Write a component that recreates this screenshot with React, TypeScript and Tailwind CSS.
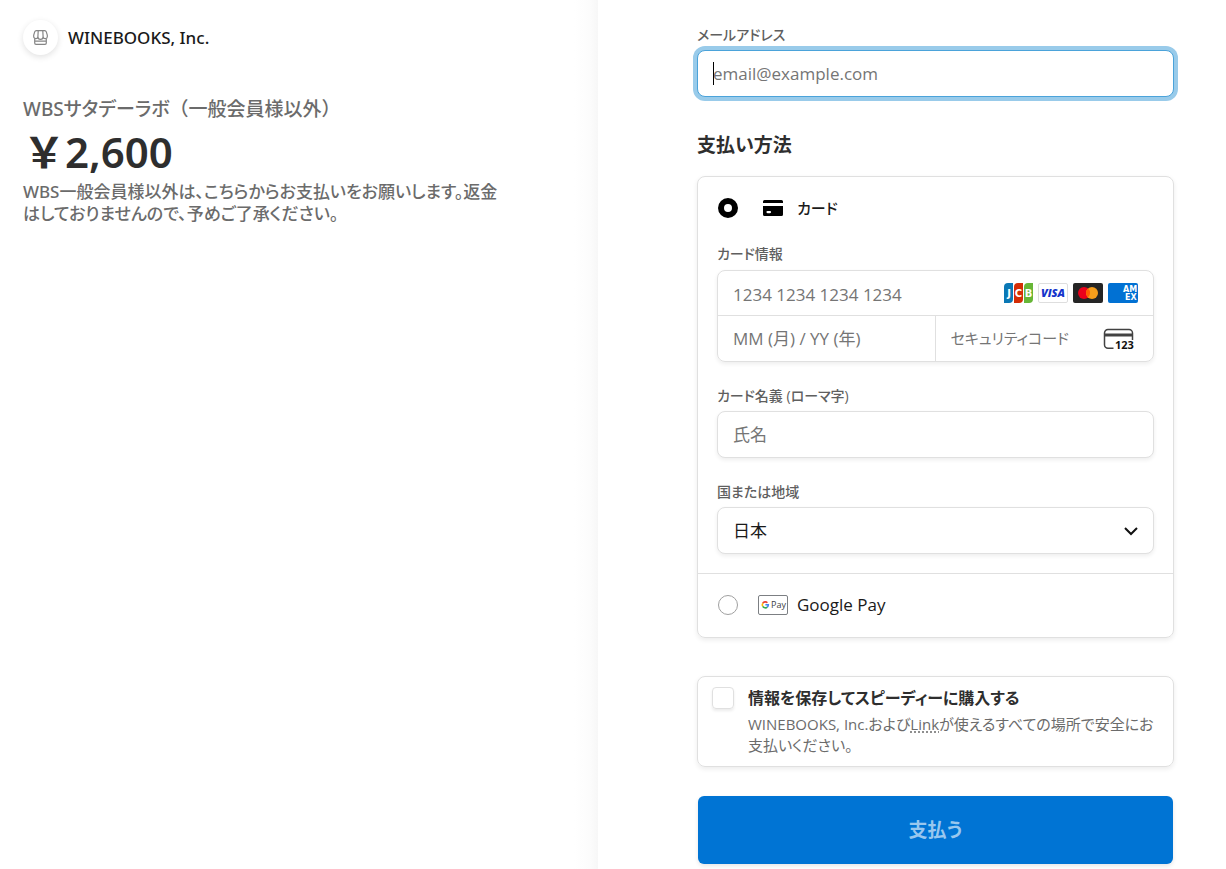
import React from "react";

const fieldClass =
  "h-[47px] w-full rounded-lg border border-[#e0e0e0] bg-white px-[15px] text-[17px] text-[#1a1a1a] shadow-[0_2px_4px_rgba(0,0,0,0.07)] outline-none placeholder:text-[#757575]";

const labelClass = "block text-[14px] leading-5 font-medium text-[#5f5f5f]";

const StoreIcon: React.FC = () => (
  <svg width="15" height="15" viewBox="0 0 15 15" fill="none" stroke="#858585" strokeWidth="1.2" strokeLinejoin="round">
    <path d="M3.400 0.700h8.200q1.300 0 1.700 1.200l1 3.300v1.200a2.100 2.100 0 0 1-4.200 0.300 2.600 2.600 0 0 1-5.200 0 2.100 2.100 0 0 1-4.200-0.300V5.200l1-3.300Q2.100 0.700 3.400 0.700z" />
    <path d="M5.200 1l-0.300 5.500M9.800 1l0.300 5.500" />
    <path d="M1.700 8.800v4.200q0 1.300 1.300 1.300h9q1.300 0 1.300-1.300V8.800M1.700 11.200h11.600" />
  </svg>
);

const JcbIcon: React.FC = () => (
  <svg width="30" height="20" viewBox="-1 0 30 20" fontFamily="DejaVu Sans, sans-serif" fontWeight="700" fontSize="10" textAnchor="middle">
    <path d="M4 0h5v16a4 4 0 0 1-4 4H0V4a4 4 0 0 1 4-4z" fill="#0a78b5" />
    <path d="M14 0h5v16a4 4 0 0 1-4 4h-5V4a4 4 0 0 1 4-4z" fill="#d42d06" />
    <path d="M24 0h5v16a4 4 0 0 1-4 4h-5V4a4 4 0 0 1 4-4z" fill="#67b637" />
    <text x="5" y="13.600" fill="#fff">J</text>
    <text x="14.500" y="13.600" fill="#fff">C</text>
    <text x="24.500" y="13.600" fill="#fff">B</text>
  </svg>
);

const VisaIcon: React.FC = () => (
  <svg width="30" height="20" viewBox="0 0 30 20">
    <rect x="0.5" y="0.5" width="29" height="19" rx="1.5" fill="#fff" stroke="#dedede" />
    <text x="15" y="14" textAnchor="middle" fontFamily="Open Sans, sans-serif" fontWeight="800" fontStyle="italic" fontSize="11" fill="#1434cb">
      VISA
    </text>
  </svg>
);

const MastercardIcon: React.FC = () => (
  <svg width="30" height="20" viewBox="0 0 30 20">
    <rect width="30" height="20" rx="2" fill="#252525" />
    <circle cx="11" cy="10" r="6" fill="#eb001b" />
    <circle cx="19" cy="10" r="6" fill="#f79e1b" />
    <path d="M15 5.500a6 6 0 0 1 0 9a6 6 0 0 1 0-9z" fill="#ff5f00" />
  </svg>
);

const AmexIcon: React.FC = () => (
  <svg width="30" height="20" viewBox="0 0 30 20" fontFamily="DejaVu Sans, sans-serif" fontWeight="700" fontSize="8" fill="#fff">
    <rect width="30" height="20" rx="2" fill="#0171d3" />
    <text x="15" y="9">AM</text>
    <text x="17" y="17">EX</text>
  </svg>
);

const CvcIcon: React.FC = () => (
  <svg width="32" height="22" viewBox="0 0 32 22">
    <path d="M10.500 20.200H5a3.500 3.500 0 0 1-3.500-3.500V5A3.500 3.500 0 0 1 5 1.500h21A3.500 3.500 0 0 1 29.500 5v7" fill="none" stroke="#424242" strokeWidth="1.500" />
    <path d="M1.500 5.500h28v3h-28z" fill="#424242" />
    <text x="12" y="20.500" fontFamily="Open Sans, sans-serif" fontWeight="700" fontSize="11" fill="#111">123</text>
  </svg>
);

const CardIcon: React.FC = () => (
  <svg width="20" height="16" viewBox="0 0 20 16">
    <path d="M1.500 0h17A1.500 1.500 0 0 1 20 1.500V3H0V1.500A1.500 1.500 0 0 1 1.500 0z" />
    <path fillRule="evenodd" d="M0 6h20v8.500a1.500 1.500 0 0 1-1.500 1.500h-17A1.500 1.500 0 0 1 0 14.500zM4.500 11a1 1 0 0 0 0 2.200H7A1 1 0 0 0 7 11z" />
  </svg>
);

const GooglePayIcon: React.FC = () => (
  <svg width="30" height="20" viewBox="0 0 30 20">
    <rect x="0.500" y="0.500" width="29" height="19" rx="1.500" fill="#fff" stroke="#7c7f83" />
    <g fill="none" strokeWidth="1.600">
      <path d="M9.400 7.700A3 3 0 0 0 4.800 8.200" stroke="#ea4335" />
      <path d="M4.800 8.200a3 3 0 0 0 0 3.200" stroke="#fbbc04" />
      <path d="M4.800 11.400a3 3 0 0 0 4.500 0.700" stroke="#34a853" />
      <path d="M9.300 12.100a3 3 0 0 0 1-2.300H7.400" stroke="#4285f4" />
    </g>
    <text x="13" y="13" fontFamily="Open Sans, sans-serif" fontSize="9" fill="#3c4043">Pay</text>
  </svg>
);

const Summary: React.FC = () => (
  <section className="w-[calc(50%-15px)] bg-linear-to-l from-[#f7f7f7] via-[#fcfcfc] via-[8px] to-white to-[24px] pt-5 pl-[23px] font-['Noto_Sans','Noto_Sans_CJK_JP',sans-serif]">
    <div className="flex items-center gap-[10px]">
      <span className="flex size-[35px] items-center justify-center rounded-full bg-white shadow-[0_2px_6px_rgba(0,0,0,0.12)]">
        <StoreIcon />
      </span>
      <span className="text-[17px] font-medium text-[#1a1a1a]">WINEBOOKS, Inc.</span>
    </div>
    <h1 className="mt-10 text-[19px] leading-7 font-medium text-[#6b6b6b]">
      WBSサタデーラボ
      <span className="[font-feature-settings:normal]">（一般会員様以外）</span>
    </h1>
    <p className="mt-[2px] mb-[2px] text-[42px] leading-[54px] font-semibold text-[#2e2e2e] [font-feature-settings:normal]">￥2,600</p>
    <p className="max-w-[480px] text-[17px] leading-[22px] font-medium text-[#6b6b6b]">
      WBS一般会員様以外は、こちらからお支払いをお願いします。返金はしておりませんので、予めご了承ください。
    </p>
  </section>
);

const CardFields: React.FC = () => (
  <>
    <fieldset className="mt-6">
      <legend className={labelClass}>カード情報</legend>
      <div className="mt-[6px] rounded-lg border border-[#e0e0e0] shadow-[0_2px_4px_rgba(0,0,0,0.07)]">
        <div className="flex h-[45px] items-center border-b border-[#e0e0e0] pr-[15px]">
          <input
            aria-label="カード番号"
            placeholder="1234 1234 1234 1234"
            className="h-full min-w-0 flex-1 pt-[2px] pl-[15px] text-[17px] outline-none placeholder:text-[#757575]"
          />
          <div className="flex gap-[5px]">
            <JcbIcon />
            <VisaIcon />
            <MastercardIcon />
            <AmexIcon />
          </div>
        </div>
        <div className="flex h-[45px]">
          <input
            aria-label="有効期限"
            placeholder="MM (月) / YY (年)"
            className="w-1/2 min-w-0 border-r border-[#e0e0e0] pl-[15px] text-[17px] outline-none placeholder:text-[#757575]"
          />
          <div className="flex w-1/2 items-center pr-[18px]">
            <input
              aria-label="セキュリティコード"
              placeholder="セキュリティコード"
              className="min-w-0 flex-1 pl-[15px] text-[15px] outline-none placeholder:text-[#757575]"
            />
            <CvcIcon />
          </div>
        </div>
      </div>
    </fieldset>

    <label htmlFor="name" className={`mt-6 mb-[5px] ${labelClass}`}>
      カード名義 (ローマ字)
    </label>
    <input id="name" placeholder="氏名" className={fieldClass} />

    <label htmlFor="country" className={`mt-6 mb-[5px] ${labelClass}`}>
      国または地域
    </label>
    <div className="relative">
      <select id="country" className={`appearance-none ${fieldClass}`}>
        <option>日本</option>
      </select>
      <svg className="pointer-events-none absolute top-5 right-4" width="14" height="9" viewBox="0 0 14 9" fill="none" stroke="#111" strokeWidth="2">
        <path d="M1 1l6 6 6-6" />
      </svg>
    </div>
  </>
);

export default function App() {
  return (
    <div className="flex min-h-screen bg-white font-['Open_Sans','Noto_Sans_CJK_JP',sans-serif] [font-feature-settings:'palt']">
      <Summary />
      <form className="flex-1 pt-[25px] pr-[52px] pb-1 pl-[99px]">
        <label htmlFor="email" className={labelClass}>
          メールアドレス
        </label>
        <div className="relative mt-[5px]">
          <input
            id="email"
            type="email"
            placeholder="email@example.com"
            className="block h-[47px] w-full rounded-lg border border-[#4ba3da] bg-white px-[15px] text-[17px] ring-4 ring-[#99cbea] outline-none placeholder:text-[#757575]"
          />
          {/* Cursor */}
          <span className="pointer-events-none absolute top-3 left-4 h-[23px] w-px bg-black" />
        </div>

        <h2 className="mt-[34px] text-[19px] leading-7 font-semibold text-[#2e2e2e]">支払い方法</h2>

        <div className="mt-[17px] rounded-lg border border-[#e0e0e0] shadow-[0_2px_5px_rgba(0,0,0,0.08)]">
          <div className="px-[19px] py-[19px]">
            <label className="flex h-6 items-center pl-px text-[15px] font-medium text-[#1a1a1a]">
              <input
                type="radio"
                name="method"
                defaultChecked
                className="size-5 appearance-none rounded-full border border-[#a0a0a0] checked:border-[6px] checked:border-black"
              />
              <span className="mr-[14px] ml-[25px]">
                <CardIcon />
              </span>
              カード
            </label>
            <CardFields />
          </div>
          <label className="flex h-16 items-center border-t border-[#e0e0e0] px-5 pb-[2px] text-[17px] text-[#1a1a1a]">
            <input
              type="radio"
              name="method"
              className="size-5 appearance-none rounded-full border border-[#a0a0a0] checked:border-[6px] checked:border-black"
            />
            <span className="mr-[9px] ml-5">
              <GooglePayIcon />
            </span>
            Google Pay
          </label>
        </div>

        <div className="mt-[38px] flex gap-[14px] rounded-lg border border-[#e0e0e0] px-[14px] py-[10px] shadow-[0_2px_5px_rgba(0,0,0,0.08)]">
          <input
            id="save"
            type="checkbox"
            className="size-[22px] shrink-0 appearance-none rounded border border-[#e0e0e0] shadow-[0_2px_3px_rgba(0,0,0,0.08)] checked:bg-black"
          />
          <div>
            <label htmlFor="save" className="block text-[16px] leading-[22px] font-semibold text-[#2e2e2e]">
              情報を保存してスピーディーに購入する
            </label>
            <p className="mt-[5px] text-[15px] leading-[21px] text-[#6b6b6b]">
              WINEBOOKS, Inc.および
              <a href="#" className="underline decoration-dotted underline-offset-2">
                Link
              </a>
              が使えるすべての場所で安全にお支払いください。
            </p>
          </div>
        </div>

        <div className="mt-[29px] px-px">
          <button
            type="submit"
            className="h-[68px] w-full rounded-md bg-[#0074d4] text-[19px] font-semibold text-[#99c7ee] shadow-[0_2px_4px_rgba(0,0,0,0.1)]"
          >
            支払う
          </button>
        </div>
      </form>
    </div>
  );
}
